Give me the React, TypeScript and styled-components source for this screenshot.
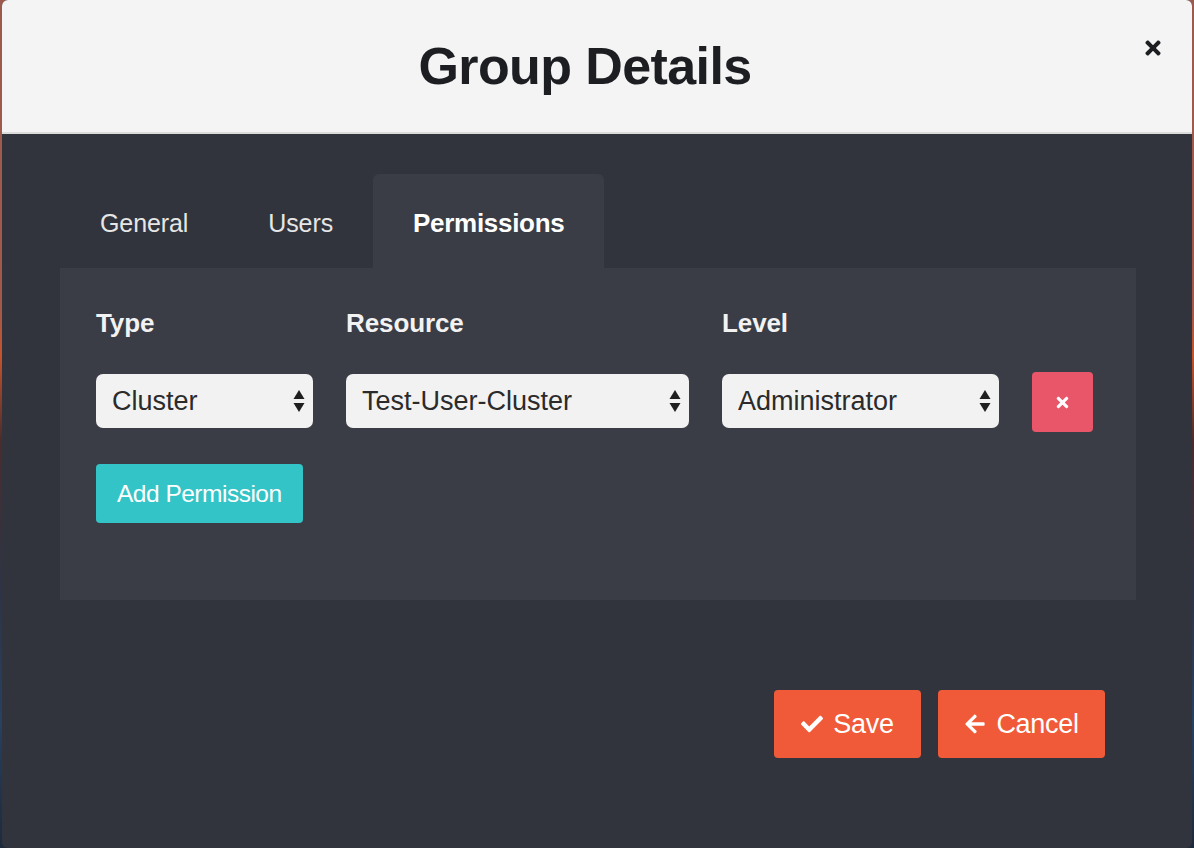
import React from "react";
import styled, { createGlobalStyle } from "styled-components";
import { FaTimes, FaCheck, FaArrowLeft } from "react-icons/fa";

const GlobalStyle = createGlobalStyle`
  html, body {
    margin: 0;
    padding: 0;
    height: 848px;
    overflow: hidden;
  }
  body {
    font-family: "Liberation Sans", Arial, Helvetica, sans-serif;
    background: linear-gradient(
      to bottom,
      #9c5a4e 0%,
      #a15a4c 36%,
      #c4542c 42%,
      #4a2c2c 52%,
      #2c3448 70%,
      #27415f 85%,
      #1d2a3c 100%
    );
  }
`;

const Page = styled.div`
  height: 848px;
  padding: 0 2px;
  box-sizing: border-box;
`;

const Modal = styled.div`
  height: 848px;
  display: flex;
  flex-direction: column;
  background: #31343c;
  border-radius: 6px;
  overflow: hidden;
`;

const Header = styled.header`
  height: 132px;
  flex: none;
  display: flex;
  align-items: center;
  padding-right: 28px;
  background: #f4f4f4;
  border-bottom: 2px solid #dcdcdc;
`;

const Title = styled.h1`
  flex: 1;
  margin: 0;
  padding-left: 26px;
  text-align: center;
  font-size: 52px;
  font-weight: 700;
  letter-spacing: -0.6px;
  color: #1d1e22;
`;

const CloseButton = styled.button`
  align-self: flex-start;
  margin-top: 37px;
  width: 22px;
  height: 22px;
  padding: 0;
  border: 0;
  background: none;
  color: #1d1e22;
  display: flex;
  align-items: center;
  justify-content: center;
  cursor: pointer;
`;

const Body = styled.div`
  flex: 1;
  padding: 40px 56px 0 58px;
  display: flex;
  flex-direction: column;
`;

const TabBar = styled.div`
  display: flex;
  height: 94px;
`;

const Tab = styled.button<{ $active?: boolean }>`
  height: 94px;
  padding: 4px 40px 0;
  border: 0;
  border-radius: 6px 6px 0 0;
  background: ${(p) => (p.$active ? "#3a3d46" : "transparent")};
  color: ${(p) => (p.$active ? "#ffffff" : "#e6e6e6")};
  font-family: inherit;
  font-size: ${(p) => (p.$active ? "26px" : "25px")};
  font-weight: ${(p) => (p.$active ? 700 : 400)};
  letter-spacing: ${(p) => (p.$active ? "-0.3px" : "-0.1px")};
  cursor: pointer;
`;

const Panel = styled.div`
  background: #3a3d46;
  padding: 40px 36px 77px;
`;

const Grid = styled.div`
  display: grid;
  grid-template-columns: 217px 343px 277px 61px;
  column-gap: 33px;
  row-gap: 31px;
  align-items: center;
`;

const Label = styled.div`
  font-size: 26px;
  line-height: 30px;
  font-weight: 700;
  letter-spacing: -0.1px;
  color: #f2f2f2;
`;

const SelectWrap = styled.div`
  position: relative;
  height: 54px;
`;

const Select = styled.select`
  appearance: none;
  -webkit-appearance: none;
  width: 100%;
  height: 54px;
  padding: 0 30px 0 16px;
  border: 0;
  border-radius: 7px;
  background: #f2f2f2;
  color: #2b2b2b;
  font-family: inherit;
  font-size: 27px;
  letter-spacing: 0;
  outline: none;
`;

const Arrows = styled.svg`
  position: absolute;
  right: 8px;
  top: 15px;
  pointer-events: none;
`;

const DeleteButton = styled.button`
  align-self: start;
  margin-top: 3px;
  width: 61px;
  height: 60px;
  border: 0;
  border-radius: 4px;
  background: #e9566a;
  color: #ffffff;
  display: flex;
  align-items: center;
  justify-content: center;
  cursor: pointer;
`;

const AddButton = styled.button`
  margin-top: 32px;
  height: 59px;
  padding: 0 21px;
  border: 0;
  border-radius: 4px;
  background: #33c4c7;
  color: #ffffff;
  font-family: inherit;
  font-size: 24.5px;
  letter-spacing: -0.5px;
  cursor: pointer;
`;

const Footer = styled.div`
  display: flex;
  justify-content: flex-end;
  gap: 17px;
  margin-top: 90px;
  padding-right: 31px;
`;

const ActionButton = styled.button<{ $width: number }>`
  width: ${(p) => p.$width}px;
  height: 68px;
  border: 0;
  border-radius: 4px;
  background: #f05a38;
  color: #ffffff;
  display: flex;
  align-items: center;
  justify-content: center;
  gap: 10px;
  font-family: inherit;
  font-size: 27px;
  letter-spacing: -0.3px;
  cursor: pointer;
`;

const SortArrows = () => (
  <Arrows width="12" height="24" viewBox="0 0 12 24">
    <path d="M6 1 L11.5 10 H0.5 Z" fill="#1f1f1f" />
    <path d="M6 23 L11.5 14 H0.5 Z" fill="#1f1f1f" />
  </Arrows>
);

const Dropdown = ({ value, options }: { value: string; options: string[] }) => (
  <SelectWrap>
    <Select defaultValue={value}>
      {options.map((o) => (
        <option key={o}>{o}</option>
      ))}
    </Select>
    <SortArrows />
  </SelectWrap>
);

export default function App() {
  return (
    <>
      <GlobalStyle />
      <Page>
        <Modal>
          <Header>
            <Title>Group Details</Title>
            <CloseButton aria-label="Close">
              <FaTimes size={22} />
            </CloseButton>
          </Header>
          <Body>
            <TabBar>
              <Tab>General</Tab>
              <Tab>Users</Tab>
              <Tab $active>Permissions</Tab>
            </TabBar>
            <Panel>
              <Grid>
                <Label>Type</Label>
                <Label>Resource</Label>
                <Label>Level</Label>
                <span />
                <Dropdown value="Cluster" options={["Cluster", "Node"]} />
                <Dropdown value="Test-User-Cluster" options={["Test-User-Cluster"]} />
                <Dropdown value="Administrator" options={["Administrator", "Viewer"]} />
                <DeleteButton aria-label="Remove">
                  <FaTimes size={17} />
                </DeleteButton>
              </Grid>
              <AddButton>Add Permission</AddButton>
            </Panel>
            <Footer>
              <ActionButton $width={147}>
                <FaCheck size={22} />
                Save
              </ActionButton>
              <ActionButton $width={167}>
                <FaArrowLeft size={22} />
                Cancel
              </ActionButton>
            </Footer>
          </Body>
        </Modal>
      </Page>
    </>
  );
}
